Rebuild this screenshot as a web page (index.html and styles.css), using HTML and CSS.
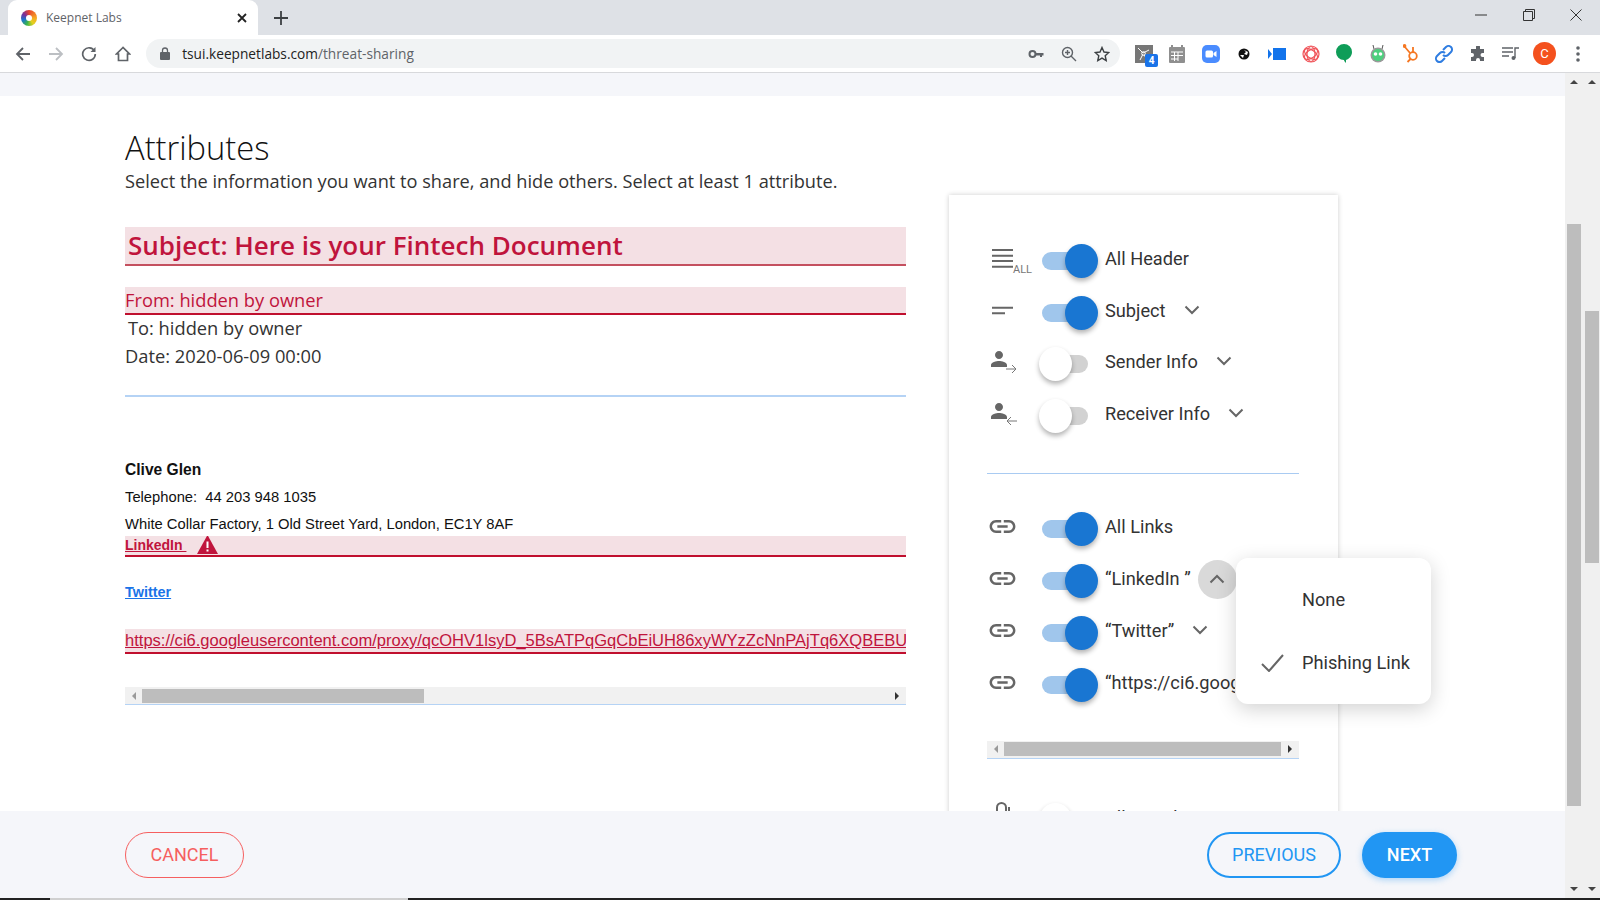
FILE: index.html
```html
<!DOCTYPE html>
<html lang="en">
<head>
    <meta charset="UTF-8">
    <title>Keepnet Labs</title>
    <link rel="stylesheet" href="styles.css">
</head>
<body>
    <svg class="defs" width="0" height="0">
        <symbol id="i-link" viewBox="0 0 24 24"><path d="M3.9 12c0-1.71 1.39-3.1 3.1-3.1h4V7H7c-2.76 0-5 2.24-5 5s2.24 5 5 5h4v-1.9H7c-1.71 0-3.1-1.39-3.1-3.1zM8 13h8v-2H8v2zm9-6h-4v1.9h4c1.71 0 3.1 1.39 3.1 3.1s-1.39 3.1-3.1 3.1h-4V17h4c2.76 0 5-2.24 5-5s-2.24-5-5-5z"/></symbol>
        <symbol id="i-down" viewBox="0 0 16 10"><path d="M1.5 1.5 8 8l6.500-6.500" fill="none" stroke="currentColor" stroke-width="2"/></symbol>
        <symbol id="i-person" viewBox="0 0 24 24"><path d="M12 12c2.210 0 4-1.790 4-4s-1.790-4-4-4-4 1.790-4 4 1.790 4 4 4zm0 2c-2.670 0-8 1.340-8 4v2h16v-2c0-2.660-5.330-4-8-4z"/></symbol>
    </svg>

    <!-- browser chrome -->
    <div class="tabstrip">
        <div class="tab">
            <span class="favicon"></span>
            <span class="tab-title">Keepnet Labs</span>
            <svg class="tab-close" width="10" height="10" viewBox="0 0 10 10"><path d="M1 1l8 8M9 1L1 9" stroke="#222" stroke-width="1.800"/></svg>
        </div>
        <svg class="new-tab" width="14" height="14" viewBox="0 0 14 14"><path d="M7 0v14M0 7h14" stroke="#3c4043" stroke-width="1.800"/></svg>
        <div class="window-controls">
            <svg width="12" height="12" viewBox="0 0 12 12"><path d="M0 6h12" stroke="#333"/></svg>
            <svg width="12" height="12" viewBox="0 0 12 12"><path d="M.5 2.500h9v9h-9zM2.500 2.500v-2h9v9h-2" fill="none" stroke="#333"/></svg>
            <svg width="12" height="12" viewBox="0 0 12 12"><path d="M.5.500l11 11M11.500.500l-11 11" stroke="#333"/></svg>
        </div>
    </div>
    <div class="toolbar">
        <div class="nav-btn"><svg width="16" height="16" viewBox="0 0 16 16"><path d="M15 8H2M8 2 2 8l6 6" fill="none" stroke="#5f6368" stroke-width="1.800"/></svg></div>
        <div class="nav-btn"><svg width="16" height="16" viewBox="0 0 16 16"><path d="M1 8h13M8 2l6 6-6 6" fill="none" stroke="#bcbfc3" stroke-width="1.800"/></svg></div>
        <div class="nav-btn"><svg width="16" height="16" viewBox="0 0 16 16"><path d="M13.500 5A6.300 6.300 0 1 0 14.300 8" fill="none" stroke="#5f6368" stroke-width="1.700"/><path d="M14.500 1v5h-5z" fill="#5f6368"/></svg></div>
        <div class="nav-btn"><svg width="16" height="16" viewBox="0 0 16 16"><path d="M8 1.500 1.500 8h2v6.500h9V8h2z" fill="none" stroke="#5f6368" stroke-width="1.700"/></svg></div>
        <div class="omnibox">
            <svg class="lock" width="10" height="13" viewBox="0 0 10 13"><path d="M1 5h8a1 1 0 0 1 1 1v6a1 1 0 0 1-1 1H1a1 1 0 0 1-1-1V6a1 1 0 0 1 1-1z" fill="#5f6368"/><path d="M2.500 5V3.500a2.500 2.500 0 0 1 5 0V5" fill="none" stroke="#5f6368" stroke-width="1.300"/></svg>
            <span class="url">tsui.keepnetlabs.com<span class="url-path">/threat-sharing</span></span>
            <svg class="omni-icon" width="16" height="16" viewBox="0 0 16 16"><circle cx="4.500" cy="8" r="3" fill="none" stroke="#5f6368" stroke-width="2"/><path d="M7 7h8.500v2.500h-1.500v1.500h-2V9.500H7z" fill="#5f6368"/></svg>
            <svg class="omni-icon" width="16" height="16" viewBox="0 0 16 16"><circle cx="6.500" cy="6.500" r="5" fill="none" stroke="#5f6368" stroke-width="1.400"/><path d="M10 10l5 5M6.500 4v5M4 6.500h5" stroke="#5f6368" stroke-width="1.400"/></svg>
            <svg class="omni-icon" width="16" height="16" viewBox="0 0 16 16"><path d="M8 1.500l2 4.500 4.800.500-3.600 3.200 1 4.800L8 12.100l-4.200 2.400 1-4.800L1.200 6.500 6 6z" fill="none" stroke="#3c4043" stroke-width="1.400"/></svg>
        </div>
        <div class="extensions">
            <div class="ext ext-badged">
                <svg width="18" height="18" viewBox="0 0 18 18"><rect width="18" height="18" fill="#777"/><path d="M3 3l5 5 6-3M8 9l-3 6M9 10l3 4" stroke="#fff" stroke-width="1" fill="none"/><circle cx="8.500" cy="8.500" r="1.800" fill="none" stroke="#fff"/></svg>
                <span class="ext-badge">4</span>
            </div>
            <div class="ext"><svg width="18" height="18" viewBox="0 0 18 18"><rect x="1" y="2" width="16" height="16" rx="1" fill="#8f8f8f"/><path d="M4 0v4M14 0v4" stroke="#8f8f8f" stroke-width="2"/><path d="M3 7h12M3 10.500h12M3 14h7M6.500 7v9M10 7v9" stroke="#fff"/></svg></div>
            <div class="ext"><svg width="18" height="18" viewBox="0 0 18 18"><rect width="18" height="18" rx="5" fill="#4a8cff"/><rect x="3.500" y="5.500" width="7.500" height="7" rx="1.500" fill="#fff"/><path d="M11.500 8l3-2v6l-3-2z" fill="#fff"/></svg></div>
            <div class="ext"><svg width="12" height="12" viewBox="0 0 12 12"><circle cx="6" cy="6" r="5.500" fill="#111"/><path d="M6 2l2 2-2 2 3 1 1-3zM2 7l3 3 1-3z" fill="#fff"/></svg></div>
            <div class="ext"><svg width="18" height="14" viewBox="0 0 18 14"><rect x="5" y="1" width="13" height="12" fill="#1273eb"/><path d="M0 2l4 5-4 5z" fill="#1273eb"/></svg></div>
            <div class="ext"><svg width="18" height="18" viewBox="0 0 18 18" fill="none" stroke="#f0555a" stroke-width="1.200"><circle cx="9" cy="9" r="8"/><ellipse cx="9" cy="9" rx="7.500" ry="4" transform="rotate(35 9 9)"/><ellipse cx="9" cy="9" rx="7.500" ry="4" transform="rotate(-35 9 9)"/><ellipse cx="9" cy="9" rx="7.500" ry="4" transform="rotate(90 9 9)"/></svg></div>
            <div class="ext"><svg width="16" height="20" viewBox="0 0 16 20"><path d="M8 0a8 8 0 0 1 8 8c0 4-3 7-6 8v3c-1-1-2-2-2-3a8 8 0 0 1 0-16z" fill="#0f9d58"/></svg></div>
            <div class="ext"><svg width="16" height="18" viewBox="0 0 16 18"><path d="M4 4 3 0M12 4l1-4" stroke="#555"/><circle cx="8" cy="10" r="7.500" fill="#9a9a9a"/><circle cx="8" cy="10" r="6" fill="#4cd07d"/><circle cx="5.500" cy="9" r="1.800" fill="#fff"/><circle cx="10.500" cy="9" r="1.800" fill="#fff"/></svg></div>
            <div class="ext"><svg width="16" height="20" viewBox="0 0 16 20" fill="none" stroke="#f57722" stroke-width="1.800"><circle cx="10" cy="12" r="3.800"/><path d="M7 9 1.500 2.500M10 8V3M7.500 15l-3 3"/><circle cx="1.500" cy="2" r="1" fill="#f57722"/></svg></div>
            <div class="ext"><svg width="18" height="18" viewBox="0 0 18 18" fill="none" stroke="#2f7de1" stroke-width="2"><path d="M8 5l3-3a3.500 3.500 0 0 1 5 5l-3 3a3.500 3.500 0 0 1-5 0"/><path d="M10 13l-3 3a3.500 3.500 0 0 1-5-5l3-3a3.500 3.500 0 0 1 5 0"/></svg></div>
            <div class="ext"><svg width="16" height="16" viewBox="0 0 16 16"><path d="M6 1a2 2 0 0 1 4 0v2h4v4h-1.500a2 2 0 0 0 0 4H14v4h-4v-1a2 2 0 0 0-4 0v1H1v-4h1a2 2 0 0 0 0-4H1V3h5z" fill="#5f6368"/></svg></div>
            <div class="ext"><svg width="18" height="14" viewBox="0 0 18 14"><path d="M0 1h11M0 5h11M0 9h7M13 11V1h4" fill="none" stroke="#5f6368" stroke-width="1.400"/><circle cx="11.500" cy="11" r="2" fill="#5f6368"/></svg></div>
            <div class="ext"><span class="avatar">C</span></div>
            <div class="ext"><svg width="4" height="16" viewBox="0 0 4 16"><circle cx="2" cy="2" r="1.800" fill="#5f6368"/><circle cx="2" cy="8" r="1.800" fill="#5f6368"/><circle cx="2" cy="14" r="1.800" fill="#5f6368"/></svg></div>
        </div>
    </div>

    <div class="viewport">
        <div class="page">
            <div class="top-band"></div>
            <div class="main">
                <section class="preview">
                    <h1>Attributes</h1>
                    <p class="lead">Select the information you want to share, and hide others. Select at least 1 attribute.</p>

                    <div class="flag flag-subject">Subject: Here is your Fintech Document</div>
                    <div class="flag flag-from">From: hidden by owner</div>
                    <div class="meta meta-to">To: hidden by owner</div>
                    <div class="meta meta-date">Date: 2020-06-09 00:00</div>
                    <hr class="rule">

                    <div class="sign sign-name">Clive Glen</div>
                    <div class="sign">Telephone:&nbsp; 44 203 948 1035</div>
                    <div class="sign sign-address">White Collar Factory, 1 Old Street Yard, London, EC1Y 8AF</div>
                    <div class="flag flag-linkedin">
                        <a href="#">LinkedIn&nbsp;</a>
                        <svg class="warn" width="21" height="19" viewBox="0 0 21 19"><path d="M10.500 0 21 19H0z" fill="#c0143c"/><path d="M9.500 6.500h2v6.500h-2zM9.500 14.500h2v2h-2z" fill="#fff"/></svg>
                    </div>
                    <a class="twitter" href="#">Twitter</a>
                    <div class="flag flag-url"><a href="#">https://ci6.googleusercontent.com/proxy/qcOHV1lsyD_5BsATPqGqCbEiUH86xyWYzZcNnPAjTq6XQBEBUwqk3nYd</a></div>

                    <div class="hscroll hscroll-preview">
                        <span class="arrow-left"></span>
                        <span class="hthumb hthumb-preview"></span>
                        <span class="arrow-right"></span>
                    </div>
                </section>

                <aside class="card">
                    <div class="row">
                        <svg class="row-icon" width="36" height="30" viewBox="0 0 36 30"><path d="M5 8h21M5 13.700h21M5 19h21M5 24.700h21" stroke="#666" stroke-width="2"/></svg>
                        <span class="row-sub">ALL</span>
                        <span class="switch on"></span>
                        <span class="row-label">All Header</span>
                    </div>
                    <div class="row">
                        <svg class="row-icon" width="36" height="30" viewBox="0 0 36 30"><path d="M5 13.700h21M5 19.300h13" stroke="#666" stroke-width="2"/></svg>
                        <span class="switch on"></span>
                        <span class="row-label">Subject</span>
                        <svg class="chev"><use href="#i-down"/></svg>
                    </div>
                    <div class="row">
                        <svg class="row-icon person" width="36" height="30" viewBox="0 0 36 30"><use href="#i-person" x="0" y="2" width="24" height="24"/><path d="M19 24h10M25 20l4 4-4 4" fill="none" stroke="#777"/></svg>
                        <span class="switch"></span>
                        <span class="row-label">Sender Info</span>
                        <svg class="chev"><use href="#i-down"/></svg>
                    </div>
                    <div class="row">
                        <svg class="row-icon person" width="36" height="30" viewBox="0 0 36 30"><use href="#i-person" x="0" y="2" width="24" height="24"/><path d="M20 24h10M24 20l-4 4 4 4" fill="none" stroke="#777"/></svg>
                        <span class="switch"></span>
                        <span class="row-label">Receiver Info</span>
                        <svg class="chev"><use href="#i-down"/></svg>
                    </div>

                    <hr class="card-rule">

                    <div class="links">
                        <div class="row">
                            <svg class="row-icon link"><use href="#i-link"/></svg>
                            <span class="switch on"></span>
                            <span class="row-label">All Links</span>
                        </div>
                        <div class="row">
                            <svg class="row-icon link"><use href="#i-link"/></svg>
                            <span class="switch on"></span>
                            <span class="row-label">“LinkedIn ”</span>
                            <span class="chev-open"><svg class="chev chev-up"><use href="#i-down"/></svg></span>
                        </div>
                        <div class="row">
                            <svg class="row-icon link"><use href="#i-link"/></svg>
                            <span class="switch on"></span>
                            <span class="row-label">“Twitter”</span>
                            <svg class="chev"><use href="#i-down"/></svg>
                        </div>
                        <div class="row">
                            <svg class="row-icon link"><use href="#i-link"/></svg>
                            <span class="switch on"></span>
                            <span class="row-label row-label-clip">“https://ci6.googleusercontent.com/proxy</span>
                        </div>
                    </div>

                    <div class="hscroll hscroll-links">
                        <span class="arrow-left"></span>
                        <span class="hthumb hthumb-links"></span>
                        <span class="arrow-right"></span>
                    </div>

                    <div class="row row-last">
                        <svg class="row-icon" width="36" height="30" viewBox="0 0 36 30"><path d="M10 30V6.500a4.500 4.500 0 0 1 9 0V30M22 6v4" fill="none" stroke="#666" stroke-width="2"/></svg>
                        <span class="switch"></span>
                        <span class="row-label">All Attachments</span>
                    </div>
                </aside>

                <div class="popup">
                    <div class="popup-item">None</div>
                    <div class="popup-item">
                        <svg class="tick" width="23" height="18" viewBox="0 0 23 18"><path d="M1 10l7 7L22 1" fill="none" stroke="#666" stroke-width="2"/></svg>
                        Phishing Link
                    </div>
                </div>
            </div>
            <footer class="actions">
                <button class="btn btn-cancel">CANCEL</button>
                <div class="actions-right">
                    <button class="btn btn-prev">PREVIOUS</button>
                    <button class="btn btn-next">NEXT</button>
                </div>
            </footer>
        </div>
        <div class="vscroll"><span class="arrow-up"></span><span class="vthumb vthumb-inner"></span><span class="arrow-down"></span></div>
        <div class="vscroll"><span class="arrow-up"></span><span class="vthumb vthumb-outer"></span><span class="arrow-down"></span></div>
    </div>

    <div class="taskbar"><span class="taskbar-app"></span></div>
</body>
</html>
```

FILE: styles.css
```css
* {
    box-sizing: border-box;
}

body {
    margin: 0;
    height: 900px;
    overflow: hidden;
    display: flex;
    flex-direction: column;
    font-family: "Open Sans", sans-serif;
    background-color: #fff;
}

.defs {
    position: absolute;
}

/* browser chrome */
.tabstrip {
    height: 35px;
    flex: none;
    display: flex;
    align-items: center;
    padding-left: 8px;
    background-color: #dee1e6;
}

.tab {
    width: 250px;
    height: 35px;
    display: flex;
    align-items: center;
    padding: 0 11px 0 13px;
    background-color: #fff;
    border-radius: 9px 9px 0 0;
}

.favicon {
    width: 16px;
    height: 16px;
    border-radius: 50%;
    border: 5px solid transparent;
    background:
        linear-gradient(#fff, #fff) padding-box,
        conic-gradient(#e8432e, #f7a823 25%, #e3d21e 40%, #3bb54a 55%, #1a75cf 70%, #7a2f9b 85%, #e8432e) border-box;
}

.tab-title {
    flex: 1;
    margin-left: 9px;
    font-size: 12px;
    color: #5f6368;
}

.new-tab {
    margin-left: 16px;
}

.window-controls {
    margin-left: auto;
    margin-right: 18px;
    display: flex;
    gap: 35.5px;
    margin-top: -5px;
}

.toolbar {
    height: 38px;
    flex: none;
    display: flex;
    align-items: center;
    padding-left: 6px;
    background-color: #fff;
    border-bottom: 1px solid #d8d9dc;
}

.nav-btn {
    width: 33.3px;
    display: flex;
    justify-content: center;
}

.omnibox {
    width: 974px;
    height: 29px;
    margin-left: 7px;
    display: flex;
    align-items: center;
    padding-left: 14px;
    border-radius: 15px;
    background-color: #f1f3f4;
}

.url {
    flex: 1;
    margin-left: 12px;
    font-size: 13.7px;
    color: #222;
}

.url-path {
    color: #5f6368;
}

.omni-icon {
    margin-right: 17px;
}

.omni-icon:last-child {
    margin-right: 10px;
}

.extensions {
    margin-left: 7px;
    display: flex;
}

.ext {
    position: relative;
    width: 33.4px;
    height: 24px;
    display: flex;
    align-items: center;
    justify-content: center;
}

.ext-badge {
    position: absolute;
    left: 18px;
    top: 12px;
    width: 13px;
    height: 13px;
    border-radius: 2px;
    background-color: #1a73e8;
    color: #fff;
    font-size: 10px;
    font-weight: 700;
    line-height: 13px;
    text-align: center;
    font-family: "Roboto", sans-serif;
}

.avatar {
    width: 23px;
    height: 23px;
    border-radius: 50%;
    background-color: #f4511e;
    color: #fff;
    font-family: "Roboto", sans-serif;
    font-size: 13px;
    line-height: 23px;
    text-align: center;
}

/* page */
.viewport {
    flex: 1;
    min-height: 0;
    display: flex;
}

.page {
    flex: 1;
    min-width: 0;
    display: flex;
    flex-direction: column;
}

.top-band {
    height: 23px;
    flex: none;
    background-color: #f5f6fa;
}

.main {
    position: relative;
    flex: 1;
    min-height: 0;
    display: flex;
    padding-left: 125px;
    overflow: hidden;
}

.preview {
    width: 781px;
    flex: none;
    padding-top: 32px;
}

h1 {
    margin: 0;
    font-size: 32.7px;
    font-weight: 300;
    line-height: 40px;
    color: #111;
}

.lead {
    margin: 1px 0 0;
    height: 25px;
    font-size: 18.2px;
    line-height: 24px;
    color: #333;
}

.flag {
    background-color: #f4e0e4;
    color: #c0143c;
    border-bottom: 2px solid #c00f2e;
    overflow: hidden;
    white-space: nowrap;
}

.flag-subject {
    height: 39px;
    margin-top: 33px;
    padding-left: 3px;
    font-size: 26px;
    font-weight: 600;
    line-height: 37px;
    border-bottom-color: #c4505f;
}

.flag-from {
    height: 28px;
    margin-top: 21px;
    font-size: 18.3px;
    line-height: 26px;
}

.meta {
    font-size: 18.3px;
    color: #333;
}

.meta-to {
    height: 28px;
    line-height: 26px;
    padding-left: 3px;
}

.meta-date {
    height: 27px;
    line-height: 25px;
}

.rule {
    height: 2px;
    margin: 25px 0 0;
    border: 0;
    background-color: #b5d3f5;
}

.sign {
    height: 27px;
    line-height: 27px;
    font-family: "Liberation Sans", sans-serif;
    font-size: 14.75px;
    color: #111;
}

.sign-name {
    margin-top: 60px;
    font-size: 15.6px;
    font-weight: 700;
    line-height: 25px;
}

.sign-address {
    height: 25px;
}

.flag-linkedin {
    height: 21px;
    display: flex;
    align-items: center;
    font-family: "Liberation Sans", sans-serif;
    font-size: 14px;
    font-weight: 700;
}

.flag-linkedin a {
    margin-top: -2px;
    color: #c0143c;
}

.warn {
    margin-left: 11px;
    margin-top: -3px;
}

.twitter {
    display: block;
    width: max-content;
    height: 20px;
    margin-top: 26px;
    font-family: "Liberation Sans", sans-serif;
    font-size: 14.4px;
    font-weight: 700;
    line-height: 18px;
    color: #1a73e8;
}

.flag-url {
    height: 25px;
    margin-top: 26px;
    font-family: "Liberation Sans", sans-serif;
    font-size: 16.55px;
    line-height: 24px;
}

.flag-url a {
    color: #c0143c;
}

.hscroll {
    height: 18px;
    display: flex;
    align-items: center;
    background-color: #f1f1f1;
    border-bottom: 1px solid #b5d3f5;
}

.hscroll-preview {
    margin-top: 33px;
}

.hthumb {
    height: 14px;
    background-color: #bdbdbd;
}

.hthumb-preview {
    width: 282px;
    margin-left: 6px;
}

.hthumb-links {
    width: 277px;
    margin-left: 6px;
}

.arrow-left,
.arrow-right {
    width: 0;
    height: 0;
    flex: none;
    border-top: 4px solid transparent;
    border-bottom: 4px solid transparent;
}

.arrow-left {
    margin-left: 7px;
    border-right: 4px solid #9a9a9a;
}

.arrow-right {
    margin-left: auto;
    margin-right: 7px;
    border-left: 4px solid #333;
}

/* attribute card */
.card {
    width: 389px;
    flex: none;
    margin: 99px 0 0 43px;
    padding: 40px 39px 0 38px;
    background-color: #fff;
    box-shadow: 0 0 5px rgba(0, 0, 0, 0.2);
    min-height: 640px;
}

.row {
    position: relative;
    height: 51.7px;
    display: flex;
    align-items: center;
    white-space: nowrap;
}

.row-icon {
    position: absolute;
    left: 0;
    top: 7px;
}

.row-icon.person,
.row-icon.link {
    fill: #666;
}

.row-icon.link {
    width: 31px;
    height: 31px;
    top: 8.5px;
}

.row-sub {
    position: absolute;
    left: 26px;
    top: 28px;
    font-family: "Roboto", sans-serif;
    font-size: 11px;
    line-height: 13px;
    color: #777;
}

.switch {
    position: relative;
    width: 46px;
    height: 18px;
    flex: none;
    margin-left: 55px;
    border-radius: 9px;
    background-color: #d2d2d2;
}

.switch::after {
    content: "";
    position: absolute;
    left: -3px;
    top: -8px;
    width: 33px;
    height: 34px;
    border-radius: 50%;
    background-color: #fff;
    box-shadow: 0 3px 5px rgba(0, 0, 0, 0.3);
}

.switch.on {
    background-color: #a0c6ec;
}

.switch.on::after {
    left: 23px;
    background-color: #1976d2;
}

.row-label {
    margin-left: 17px;
    margin-bottom: 5px;
    font-family: "Roboto", sans-serif;
    font-size: 18.2px;
    color: #333;
}

.row-label-clip {
    width: 130px;
    overflow: hidden;
}

.chev {
    width: 16px;
    height: 10px;
    flex: none;
    margin-left: 18px;
    margin-bottom: 6px;
    color: #666;
}

.chev-open {
    width: 39px;
    height: 39px;
    flex: none;
    margin-left: 7px;
    margin-bottom: 3px;
    display: flex;
    align-items: center;
    justify-content: center;
    border-radius: 50%;
    background-color: #d9d9d9;
}

.chev-up {
    margin: 0;
    transform: rotate(180deg);
}

.card-rule {
    height: 1px;
    margin: 31px 0 29px;
    border: 0;
    background-color: #a9cbf2;
}

.links {
    overflow: hidden;
}

.links .row {
    height: 52px;
}

.hscroll-links {
    margin-top: 30px;
}

.row-last {
    margin-top: 35px;
}

/* menu over the card */
.popup {
    position: absolute;
    left: 1236px;
    top: 462px;
    width: 195px;
    height: 146px;
    padding-top: 11px;
    border-radius: 12px;
    background-color: #fff;
    box-shadow: 0 5px 20px rgba(0, 0, 0, 0.18);
    z-index: 2;
}

.popup-item {
    position: relative;
    height: 63px;
    padding-left: 66px;
    font-family: "Roboto", sans-serif;
    font-size: 18.2px;
    line-height: 62px;
    color: #333;
}

.tick {
    position: absolute;
    left: 25px;
    top: 22px;
}

.actions {
    height: 87px;
    flex: none;
    display: flex;
    align-items: center;
    justify-content: space-between;
    padding: 0 108px 0 125px;
    background-color: #f5f6fa;
    position: relative;
    z-index: 3;
}

.actions-right {
    display: flex;
    gap: 21px;
}

.btn {
    height: 46px;
    border-radius: 23px;
    border: 2px solid;
    background: transparent;
    font-family: "Roboto", sans-serif;
    font-size: 18px;
}

.btn-cancel {
    width: 119px;
    border-width: 1.5px;
    border-color: #f55f5f;
    color: #f55f5f;
}

.btn-prev {
    width: 134px;
    border-color: #2196f3;
    color: #2196f3;
}

.btn-next {
    width: 95px;
    border-color: #2196f3;
    background-color: #2196f3;
    color: #fff;
    font-weight: 500;
    box-shadow: 0 2px 6px rgba(33, 150, 243, 0.35);
}

.vscroll {
    position: relative;
    width: 17.5px;
    flex: none;
    background-color: #f0f0f0;
}

.vthumb {
    position: absolute;
    left: 2px;
    width: 14px;
    background-color: #bdbdbd;
}

.vthumb-inner {
    top: 151px;
    height: 582px;
}

.vthumb-outer {
    top: 238px;
    height: 252px;
}

.arrow-up,
.arrow-down {
    position: absolute;
    left: 5px;
    width: 0;
    height: 0;
    border-left: 4px solid transparent;
    border-right: 4px solid transparent;
}

.arrow-up {
    top: 7px;
    border-bottom: 4px solid #444;
}

.arrow-down {
    bottom: 7px;
    border-top: 4px solid #444;
}

.taskbar {
    height: 2px;
    flex: none;
    padding-left: 50px;
    background-color: #222;
}

.taskbar-app {
    display: block;
    width: 358px;
    height: 2px;
    background-color: #d0d0d0;
}
```
